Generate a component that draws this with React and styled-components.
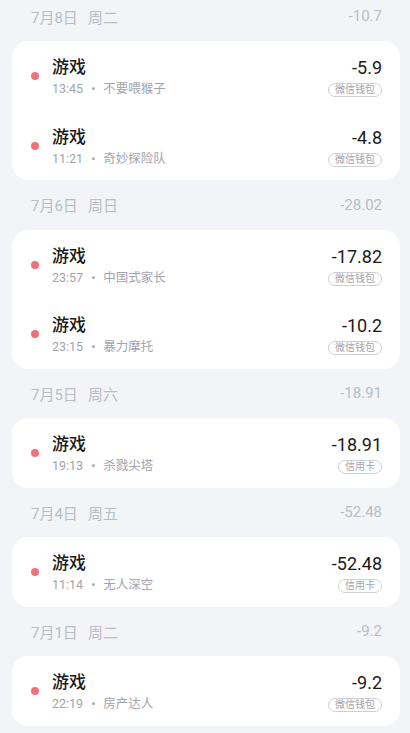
import React from 'react'
import styled, { createGlobalStyle } from 'styled-components'

const GlobalStyle = createGlobalStyle`
  html, body {
    margin: 0;
    padding: 0;
    background: #f2f4f8;
    overflow: hidden;
  }
  body {
    font-family: Roboto, 'Noto Sans CJK SC', sans-serif;
  }
`

const days = [
  {
    date: '7月8日',
    week: '周二',
    total: '-10.7',
    items: [
      { time: '13:45', note: '不要喂猴子', amount: '-5.9', pay: '微信钱包' },
      { time: '11:21', note: '奇妙探险队', amount: '-4.8', pay: '微信钱包' },
    ],
  },
  {
    date: '7月6日',
    week: '周日',
    total: '-28.02',
    items: [
      { time: '23:57', note: '中国式家长', amount: '-17.82', pay: '微信钱包' },
      { time: '23:15', note: '暴力摩托', amount: '-10.2', pay: '微信钱包' },
    ],
  },
  {
    date: '7月5日',
    week: '周六',
    total: '-18.91',
    items: [{ time: '19:13', note: '杀戮尖塔', amount: '-18.91', pay: '信用卡' }],
  },
  {
    date: '7月4日',
    week: '周五',
    total: '-52.48',
    items: [{ time: '11:14', note: '无人深空', amount: '-52.48', pay: '信用卡' }],
  },
  {
    date: '7月1日',
    week: '周二',
    total: '-9.2',
    items: [{ time: '22:19', note: '房产达人', amount: '-9.2', pay: '微信钱包' }],
  },
]

const App = () => {
  return (
    <Page>
      <GlobalStyle />
      {days.map((day) => (
        <section key={day.date}>
          <DayHeader>
            <span>
              {day.date}
              <Week>{day.week}</Week>
            </span>
            <span>{day.total}</span>
          </DayHeader>
          <Card>
            {day.items.map((item) => (
              <Row key={item.time}>
                <Dot />
                <Info>
                  <Title>游戏</Title>
                  <Sub>
                    {item.time}
                    <Sep>•</Sep>
                    {item.note}
                  </Sub>
                </Info>
                <Right>
                  <Amount>{item.amount}</Amount>
                  <PayTag>{item.pay}</PayTag>
                </Right>
              </Row>
            ))}
          </Card>
        </section>
      ))}
    </Page>
  )
}

export default App

const Page = styled.div`
  margin-top: -8.5px;
  padding: 0 10px 0 12px;
`

const DayHeader = styled.div`
  display: flex;
  justify-content: space-between;
  align-items: center;
  height: 49.5px;
  padding: 0 18px 0 19px;
  font-size: 15px;
  color: #b9bdc6;
`

const Week = styled.span`
  margin-left: 10px;
`

const Card = styled.div`
  background: #fff;
  border-radius: 16px;
  overflow: hidden;
`

const Row = styled.div`
  display: flex;
  align-items: center;
  height: 69.5px;
  padding: 0 18px 0 19px;
  box-sizing: border-box;
`

const Dot = styled.span`
  width: 8px;
  height: 8px;
  border-radius: 50%;
  background: #f2707a;
  flex-shrink: 0;
  margin-right: 13px;
  margin-top: 1px;
`

const Info = styled.div`
  flex: 1;
  display: flex;
  flex-direction: column;
  padding-top: 3px;
`

const Title = styled.div`
  font-size: 17px;
  line-height: 22px;
  font-weight: 500;
  color: #1a1a1a;
`

const Sub = styled.div`
  margin-top: 2px;
  font-size: 12.5px;
  line-height: 18px;
  color: #a3a4aa;
`

const Sep = styled.span`
  margin: 0 8px;
`

const Right = styled.div`
  display: flex;
  flex-direction: column;
  align-items: flex-end;
  padding-top: 3px;
`

const Amount = styled.div`
  font-size: 18px;
  line-height: 22px;
  color: #1a1a1a;
`

const PayTag = styled.span`
  margin-top: 4px;
  height: 14px;
  box-sizing: border-box;
  padding: 0 6px;
  border: 1px solid #cfcfd3;
  border-radius: 7px;
  font-size: 10px;
  line-height: 12px;
  color: #a3a4aa;
`
